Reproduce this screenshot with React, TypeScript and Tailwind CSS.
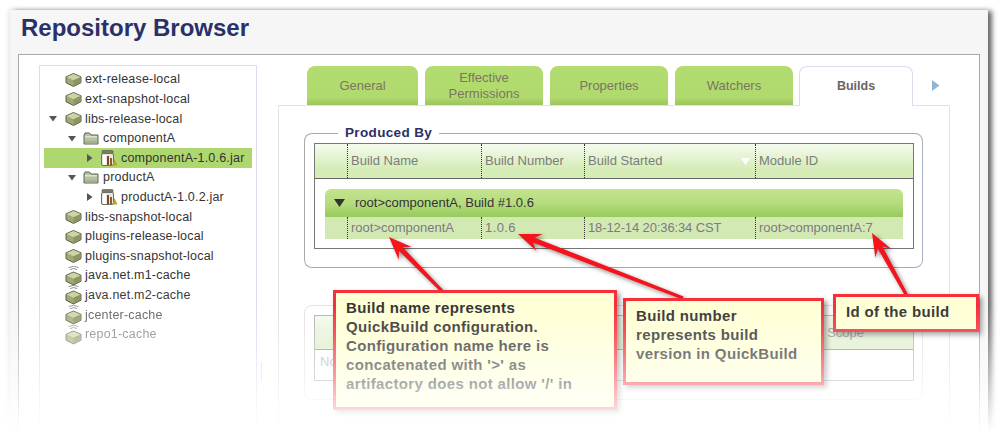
const navy = "text-[#2a3068]";

const repos = [
  { name: "ext-release-local", type: "repo" },
  { name: "ext-snapshot-local", type: "repo" },
  { name: "libs-release-local", type: "repo", open: true },
];

const repos2 = [
  { name: "libs-snapshot-local", cache: false, cls: "text-[#333]" },
  { name: "plugins-release-local", cache: false, cls: "text-[#333]" },
  { name: "plugins-snapshot-local", cache: false, cls: "text-[#333]" },
  { name: "java.net.m1-cache", cache: true, cls: "text-[#333]" },
  { name: "java.net.m2-cache", cache: true, cls: "text-[#3c3c3c]" },
  { name: "jcenter-cache", cache: true, cls: "text-[#555] opacity-90" },
  { name: "repo1-cache", cache: true, cls: "text-[#666] opacity-75" },
];

const Down = () => (
  <svg width="8" height="6" viewBox="0 0 8 6" className="shrink-0">
    <polygon points="0,0 8,0 4,5.5" fill="#555" />
  </svg>
);

const Right = () => (
  <svg width="6" height="8" viewBox="0 0 6 8" className="shrink-0">
    <polygon points="0,0 5.5,4 0,8" fill="#555" />
  </svg>
);

const RepoIcon = ({ cache }: { cache?: boolean }) => (
  <svg width="17" height="20" viewBox="0 0 17 20" className="shrink-0">
    {cache && (
      <g fill="none" stroke="#777" strokeWidth="0.8">
        <path d="M3.5 1.6 Q8.5 -1 13.5 1.6" />
        <path d="M5 3.6 Q8.5 1.4 12 3.6" />
      </g>
    )}
    <g transform={cache ? "translate(0 1)" : "translate(0 -1.5)"}>
      <polygon points="8.5,5 16,8.3 16,14.2 8.5,18 1,14.2 1,8.3" fill="#a2a874" stroke="#5e614a" strokeWidth="1" strokeLinejoin="round" />
      <polygon points="8.5,5.6 15.4,8.6 8.5,11.8 1.6,8.6" fill="#c9d5a2" />
      <polygon points="8.5,11.8 15.5,8.8 15.5,13.9 8.5,17.4" fill="#8e9464" />
    </g>
  </svg>
);

const FolderIcon = () => (
  <svg width="16" height="13" viewBox="0 0 16 13" className="shrink-0">
    <path d="M1 3 V12 H15 V3 H8 L6.5 1 H2 Z" fill="#b4c2a2" stroke="#5f6658" strokeWidth="1" strokeLinejoin="round" />
    <rect x="2" y="4" width="12" height="1.5" fill="#dde4d2" />
    <rect x="2" y="9" width="12" height="2.5" fill="#a3b290" />
  </svg>
);

const JarIcon = () => (
  <svg width="17" height="16" viewBox="0 0 17 16" className="shrink-0">
    <rect x="1" y="0.5" width="11" height="3.5" rx="1" fill="#7c7c66" stroke="#55554a" strokeWidth="0.6" />
    <rect x="0.5" y="3.5" width="12" height="12" rx="1.5" fill="#e8e8e2" stroke="#6f6f66" />
    <rect x="2" y="5" width="3" height="10" fill="#fff" />
    <rect x="6" y="6" width="2" height="9" fill="#7a4a2a" />
    <rect x="9" y="8" width="2" height="7" fill="#8c5a2e" />
    <polygon points="11.5,15.5 13.5,9 16.5,15.5" fill="#b0a420" />
  </svg>
);

const Tab = ({ className, children }: { className: string; children: React.ReactNode }) => (
  <div className={`h-[39px] rounded-t-[8px] bg-[linear-gradient(to_bottom,#b2dc70_0%,#b0da6e_80%,#9cc45e_100%)] flex items-center justify-center text-center text-[13px] leading-[16px] text-[#7c7560] ${className}`}>
    {children}
  </div>
);

const arrowPoints = (tx: number, ty: number, bx: number, by: number) => {
  const len = Math.hypot(bx - tx, by - ty);
  const ux = (bx - tx) / len;
  const uy = (by - ty) / len;
  const at = (back: number, side: number) => `${tx + ux * back - uy * side},${ty + uy * back + ux * side}`;
  return [
    at(0, 0),
    at(23, 9),
    at(17, 2.6),
    at(len, 1.6),
    at(len, -1.6),
    at(17, -2.6),
    at(23, -9),
  ].join(" ");
};

const Callout = ({ className, children }: { className: string; children: React.ReactNode }) => (
  <div className={`absolute z-20 border-[3px] border-[#f5303a] bg-[#ffffd6] shadow-[3px_3px_5px_rgba(0,0,0,0.4)] text-[#333] font-bold text-[15px] leading-[19px] tracking-[0.35px] ${className}`}>
    {children}
  </div>
);

export default function App() {
  return (
    <div className="relative w-[999px] h-[443px] overflow-hidden bg-white [font-family:'Liberation_Sans',Arial,sans-serif]">
      <div className="ml-[10px] mt-[10px] w-[978px] h-[450px] bg-[#f6f6f6] shadow-[4px_1px_5px_rgba(0,0,0,0.6),-2px_-1px_5px_rgba(0,0,0,0.08)]">
        <h1 className={`h-[44px] pl-[11px] pt-[3px] text-[24px] leading-[30px] font-bold ${navy}`}>Repository Browser</h1>
        <div className="ml-[8px] w-[962px] h-[400px] border border-[#aaa] bg-white flex pl-[20px] pt-[10px]">
          {/* tree */}
          <div className="w-[218px] h-[380px] border border-[#dcdcf0] shrink-0 pt-[4px] pl-[4px] pr-[4px] text-[12.5px] text-[#333]">
            {repos.map((r) => (
              <div key={r.name} className="h-[19.6px] flex items-center">
                <div className="w-[21px] flex justify-center pl-[2px] pr-[6px]">{r.open && <Down />}</div>
                <RepoIcon />
                <span className="ml-[3px] tracking-[0.2px]">{r.name}</span>
              </div>
            ))}
            <div className="h-[19.6px] flex items-center pl-[24px]">
              <Down />
              <div className="ml-[7px]"><FolderIcon /></div>
              <span className="ml-[4px] tracking-[0.2px]">componentA</span>
            </div>
            <div className="h-[19.6px] flex items-center pl-[43px] bg-[#aed86f]">
              <Right />
              <div className="ml-[8px]"><JarIcon /></div>
              <span className="ml-[3px] tracking-[0.2px]">componentA-1.0.6.jar</span>
            </div>
            <div className="h-[19.6px] flex items-center pl-[24px]">
              <Down />
              <div className="ml-[7px]"><FolderIcon /></div>
              <span className="ml-[4px] tracking-[0.2px]">productA</span>
            </div>
            <div className="h-[19.6px] flex items-center pl-[43px]">
              <Right />
              <div className="ml-[8px]"><JarIcon /></div>
              <span className="ml-[3px] tracking-[0.2px]">productA-1.0.2.jar</span>
            </div>
            {repos2.map((r) => (
              <div key={r.name} className={`h-[19.6px] flex items-center ${r.cls}`}>
                <div className="w-[21px]" />
                <RepoIcon cache={r.cache} />
                <span className="ml-[3px] tracking-[0.2px]">{r.name}</span>
              </div>
            ))}
          </div>
          {/* splitter */}
          <div className="w-px h-[19px] mt-[297px] ml-[4px] bg-[#ddd] shrink-0" />
          {/* details */}
          <div className="ml-[16px] w-[672px] shrink-0 pt-[1px]">
            <div className="flex gap-[7px] pl-[29px] h-[39px] items-stretch">
              <Tab className="w-[111px]">General</Tab>
              <Tab className="w-[118px]">
                <span className="pt-[1px]">Effective<br />Permissions</span>
              </Tab>
              <Tab className="w-[118px]">Properties</Tab>
              <Tab className="w-[118px]">Watchers</Tab>
              <div className="ml-[-1px] relative z-10 w-[114px] h-[40px] rounded-t-[8px] border border-b-0 border-[#dcdcee] bg-white flex items-center justify-center text-[12.5px] font-bold text-[#666]">
                Builds
              </div>
              <div className="ml-[12px] flex items-center pb-[1px]">
                <svg width="8" height="11" viewBox="0 0 8 11"><polygon points="0,0 7.5,5.5 0,11" fill="#8fb6d4" /></svg>
              </div>
            </div>
            <div className="h-[400px] border border-[#e2e2e2] pt-[19px] pl-[25px]">
              <fieldset className="w-[619px] h-[143px] border border-[#aaa] rounded-[8px] pl-[9px] border-r-[#a8b0c8]">
                <legend className={`ml-[24px] px-[7px] h-[16px] text-[13.5px] leading-[16px] font-bold tracking-[0.35px] ${navy}`}>Produced By</legend>
                <div className="mt-[2px] w-[600px] h-[106px] border border-[#777] text-[13px] text-[#7c7c7c]">
                  <div className="grid grid-cols-[32px_134px_103px_171px_1fr] h-[35px] border-b border-[#666] bg-[linear-gradient(to_bottom,#f5fbee_0%,#d5ecb6_75%,#d5ecb6_100%)]">
                    <div />
                    <div className="border-l border-dotted border-[#333] pl-[3px] flex items-center">Build Name</div>
                    <div className="border-l border-dotted border-[#333] pl-[3px] flex items-center">Build Number</div>
                    <div className="border-l border-dotted border-[#333] pl-[3px] flex items-center justify-between pr-[5px]">
                      Build Started
                      <svg width="9" height="7" viewBox="0 0 9 7"><polygon points="0,0 9,0 4.5,7" fill="#fff" /></svg>
                    </div>
                    <div className="border-l border-dotted border-[#333] pl-[3px] flex items-center">Module ID</div>
                  </div>
                  <div className="mt-[10px] ml-[10px] w-[578px]">
                    <div className="h-[28px] rounded-t-[6px] bg-[linear-gradient(to_bottom,#c2e48e_0%,#b6dc7e_50%,#98ca5c_100%)] flex items-center pl-[9px] text-[#333]">
                      <svg width="11" height="8" viewBox="0 0 11 8"><polygon points="0,0 11,0 5.5,8" fill="#333" /></svg>
                      <span className="ml-[10px]">root&gt;componentA, Build #1.0.6</span>
                    </div>
                    <div className="grid grid-cols-[22px_134px_103px_171px_1fr] h-[22px] bg-[#d3e9b4] items-stretch">
                      <div />
                      <div className="border-l border-dotted border-[#333] pl-[3px] flex items-center">root&gt;componentA</div>
                      <div className="border-l border-dotted border-[#333] pl-[3px] flex items-center tracking-[0.4px]">1.0.6</div>
                      <div className="border-l border-dotted border-[#333] pl-[3px] flex items-center tracking-[-0.12px]">18-12-14 20:36:34 CST</div>
                      <div className="border-l border-dotted border-[#333] pl-[3px] flex items-center">root&gt;componentA:7</div>
                    </div>
                  </div>
                </div>
              </fieldset>
              <div className="mt-[37px] w-[619px] h-[95px] border border-[#e4e4e4] rounded-[8px] pl-[9px] pt-[9px]">
                <div className="w-[600px] h-[66px] border border-[#b4b4b4] text-[13px]">
                  <div className="h-[34px] border-b border-[#999] bg-[linear-gradient(to_bottom,#f4faec_0%,#deeeca_100%)] flex items-center justify-end pr-[49px] text-[#999]">
                    Scope
                  </div>
                  <div className="pl-[5px] pt-[2px] text-[#b0b0c8]">No</div>
                </div>
              </div>
            </div>
          </div>
        </div>
      </div>

      <svg width="999" height="443" viewBox="0 0 999 443" className="absolute top-0 left-0 z-10 pointer-events-none drop-shadow-[2px_2px_2px_rgba(0,0,0,0.45)]">
        <polygon points={arrowPoints(389, 237, 443, 292)} fill="#f5141c" />
        <polygon points={arrowPoints(518, 234, 683, 298)} fill="#f5141c" />
        <polygon points={arrowPoints(872, 233, 907, 296)} fill="#f5141c" />
      </svg>

      <Callout className="left-[333px] top-[290px] w-[284px] h-[120px] pl-[10px] pt-[5px]">
        Build name represents<br />
        QuickBuild configuration.<br />
        Configuration name here is<br />
        concatenated with '&gt;' as<br />
        artifactory does not allow '/' in
      </Callout>
      <Callout className="left-[623px] top-[298px] w-[201px] h-[87px] pl-[10px] pt-[5px]">
        Build number<br />
        represents build<br />
        version in QuickBuild
      </Callout>
      <Callout className="left-[833px] top-[294px] w-[146px] h-[38px] pl-[10px] pt-[5px]">
        Id of the build
      </Callout>

      {/* bottom fade of the cropped capture */}
      <div className="absolute inset-0 z-30 pointer-events-none bg-[linear-gradient(to_bottom,rgba(255,255,255,0)_305px,rgba(255,255,255,0.15)_330px,rgba(255,255,255,0.6)_385px,#fff_432px)]" />
    </div>
  );
}
